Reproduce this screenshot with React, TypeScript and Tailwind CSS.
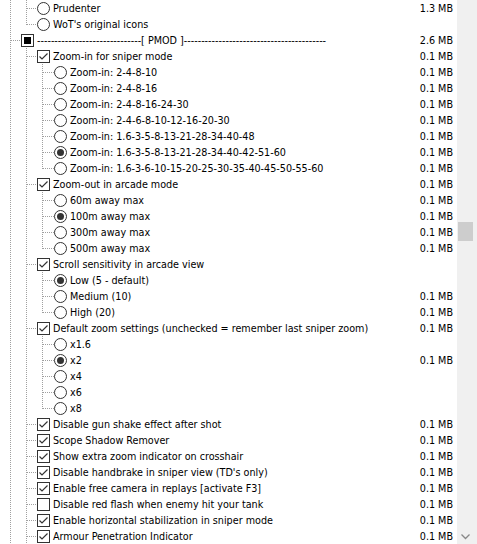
// App.tsx - component tree of an installer (Windows tree view look)

type Kind = 'radio' | 'check' | 'tri';

type Row = {
  level: number;
  kind: Kind;
  on?: boolean;
  label: string;
  size?: string;
  last?: boolean; // last child in its group
};

const mb = '0.1 MB';

const rows: Row[] = [
  { level: 1, kind: 'radio', label: 'Prudenter', size: '1.3 MB' },
  { level: 1, kind: 'radio', label: "WoT's original icons", last: true },
  {
    level: 0,
    kind: 'tri',
    label: '-'.repeat(30) + '[ PMOD ]' + '-'.repeat(41),
    size: '2.6 MB',
  },
  { level: 1, kind: 'check', on: true, label: 'Zoom-in for sniper mode', size: mb },
  { level: 2, kind: 'radio', label: 'Zoom-in: 2-4-8-10', size: mb },
  { level: 2, kind: 'radio', label: 'Zoom-in: 2-4-8-16', size: mb },
  { level: 2, kind: 'radio', label: 'Zoom-in: 2-4-8-16-24-30', size: mb },
  { level: 2, kind: 'radio', label: 'Zoom-in: 2-4-6-8-10-12-16-20-30', size: mb },
  { level: 2, kind: 'radio', label: 'Zoom-in: 1.6-3-5-8-13-21-28-34-40-48', size: mb },
  { level: 2, kind: 'radio', on: true, label: 'Zoom-in: 1.6-3-5-8-13-21-28-34-40-42-51-60', size: mb },
  { level: 2, kind: 'radio', label: 'Zoom-in: 1.6-3-6-10-15-20-25-30-35-40-45-50-55-60', size: mb, last: true },
  { level: 1, kind: 'check', on: true, label: 'Zoom-out in arcade mode', size: mb },
  { level: 2, kind: 'radio', label: '60m away max', size: mb },
  { level: 2, kind: 'radio', on: true, label: '100m away max', size: mb },
  { level: 2, kind: 'radio', label: '300m away max', size: mb },
  { level: 2, kind: 'radio', label: '500m away max', size: mb, last: true },
  { level: 1, kind: 'check', on: true, label: 'Scroll sensitivity in arcade view' },
  { level: 2, kind: 'radio', on: true, label: 'Low (5 - default)' },
  { level: 2, kind: 'radio', label: 'Medium (10)', size: mb },
  { level: 2, kind: 'radio', label: 'High (20)', size: mb, last: true },
  {
    level: 1,
    kind: 'check',
    on: true,
    label: 'Default zoom settings (unchecked = remember last sniper zoom)',
    size: mb,
  },
  { level: 2, kind: 'radio', label: 'x1.6' },
  { level: 2, kind: 'radio', on: true, label: 'x2', size: mb },
  { level: 2, kind: 'radio', label: 'x4' },
  { level: 2, kind: 'radio', label: 'x6' },
  { level: 2, kind: 'radio', label: 'x8', last: true },
  { level: 1, kind: 'check', on: true, label: 'Disable gun shake effect after shot', size: mb },
  { level: 1, kind: 'check', on: true, label: 'Scope Shadow Remover', size: mb },
  { level: 1, kind: 'check', on: true, label: 'Show extra zoom indicator on crosshair', size: mb },
  { level: 1, kind: 'check', on: true, label: "Disable handbrake in sniper view (TD's only)", size: mb },
  { level: 1, kind: 'check', on: true, label: 'Enable free camera in replays [activate F3]', size: mb },
  { level: 1, kind: 'check', label: 'Disable red flash when enemy hit your tank', size: mb },
  { level: 1, kind: 'check', on: true, label: 'Enable horizontal stabilization in sniper mode', size: mb },
  { level: 1, kind: 'check', on: true, label: 'Armour Penetration Indicator', size: mb },
];

const iconLeft = [21, 37, 54];
const guideX = [10, 26, 42];
const dot = '#a0a0a0';

// dotted vertical guide from y=a to y=b
function VLine({ x, a, b }: { x: number; a: number; b: number }) {
  return (
    <line x1={x + 0.5} y1={a} x2={x + 0.5} y2={b} stroke={dot} strokeWidth={1} strokeDasharray="1 1" shapeRendering="crispEdges" />
  );
}

function Guides({ row }: { row: Row }) {
  const w = iconLeft[row.level];
  const gx = guideX[row.level];
  return (
    <svg width={w} height={16} className="shrink-0">
      {/* root line runs through every row */}
      <VLine x={guideX[0]} a={0} b={16} />
      {row.level === 2 && <VLine x={guideX[1]} a={0} b={16} />}
      {row.level >= 1 && <VLine x={gx} a={0} b={row.last ? 9 : 16} />}
      <line x1={gx + 1} y1={8.5} x2={w} y2={8.5} stroke={dot} strokeDasharray="1 1" shapeRendering="crispEdges" />
    </svg>
  );
}

function Icon({ kind, on }: { kind: Kind; on?: boolean }) {
  if (kind === 'radio') {
    return (
      <svg width={13} height={13} className="mt-[2px] shrink-0">
        <circle cx={6.5} cy={6.5} r={6} fill="#fff" stroke="#333" strokeWidth={1} />
        {on && <circle cx={6.5} cy={6.5} r={3.5} fill="#333" />}
      </svg>
    );
  }
  return (
    <svg width={13} height={13} className="mt-[2px] shrink-0">
      <rect x={0.5} y={0.5} width={12} height={12} fill="#fff" stroke="#333" strokeWidth={1} shapeRendering="crispEdges" />
      {kind === 'tri' && <rect x={3} y={3} width={7} height={7} fill="#000" />}
      {kind === 'check' && on && (
        <polyline points="2.5,6.5 5,9 10.5,3.5" fill="none" stroke="#333" strokeWidth={1.2} />
      )}
    </svg>
  );
}

export default function App() {
  return (
    <div
      className="flex h-[544px] w-[477px] overflow-hidden bg-white text-[10.7px] text-black"
      style={{ fontFamily: '"DejaVu Sans Condensed", "Liberation Sans", sans-serif' }}
    >
      <div className="flex w-[457px] shrink-0 flex-col">
        {rows.map((row, i) => (
          <div key={i} className="flex h-4 shrink-0 items-start whitespace-nowrap">
            <Guides row={row} />
            <Icon kind={row.kind} on={row.on} />
            <span className="ml-[3px] pt-px leading-4">{row.label}</span>
            <span className="ml-auto pt-px pr-[4px] leading-4">{row.size}</span>
          </div>
        ))}
      </div>
      <div className="flex w-[20px] shrink-0 flex-col bg-[#f0f0f0]">
        <div className="flex w-[17px] flex-1 flex-col items-center">
          <div className="mt-[222px] h-[19px] w-[15px] bg-[#cdcdcd]" />
          <div className="mt-auto mb-[2px] flex h-[10px] items-center justify-center">
            <svg width={9} height={6}>
              <polyline points="0.5,0.5 4.5,4.5 8.5,0.5" fill="none" stroke="#888" strokeWidth={1.3} />
            </svg>
          </div>
        </div>
      </div>
    </div>
  );
}
